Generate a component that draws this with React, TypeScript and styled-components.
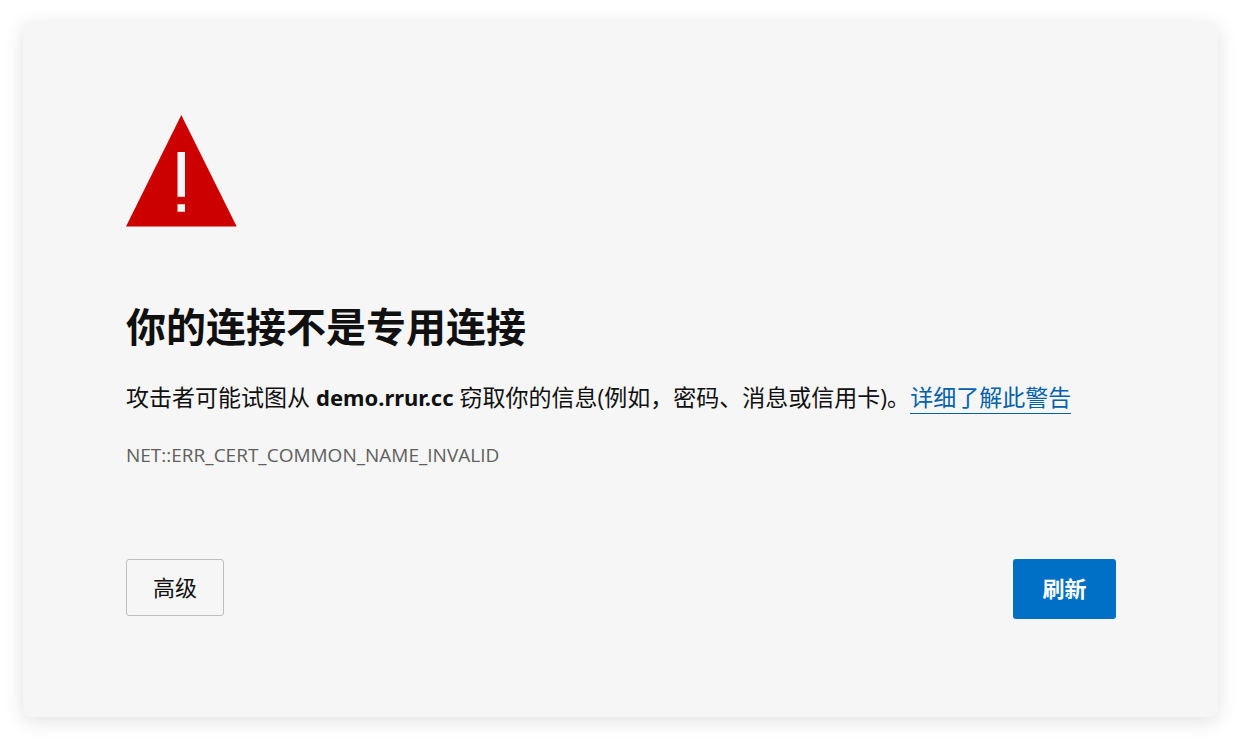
import React from "react";
import styled, { createGlobalStyle } from "styled-components";

const GlobalStyle = createGlobalStyle`
  * { box-sizing: border-box; }
  body {
    margin: 0;
    background: #ffffff;
    color: #101010;
    font-family: "Open Sans", "Noto Sans", "Noto Sans CJK SC", sans-serif;
  }
`;

const Page = styled.div`
  padding: 22px 23px 23px;
`;

const Card = styled.main`
  padding: 93px 102px 98px 103px;
  background: #f6f6f6;
  border-radius: 8px;
  box-shadow: 0 4px 20px rgba(0, 0, 0, 0.12);
`;

const WarningIcon = styled.svg`
  display: block;
  width: 111px;
  height: 112px;
`;

const Title = styled.h1`
  margin: 72px 0 0;
  font-size: 40px;
  line-height: 56px;
  font-weight: 700;
`;

const Message = styled.p`
  margin: 26px 0 0;
  font-size: 23px;
  line-height: 32px;
`;

const Host = styled.strong`
  font-family: "Noto Sans", sans-serif;
  font-size: 22px;
`;

const LearnMore = styled.a`
  color: #0061ab;
  text-decoration: none;
  border-bottom: 1px solid #0061ab;
`;

const ErrorCode = styled.div`
  margin-top: 28px;
  color: #5f5f5f;
  font-size: 19px;
  line-height: 28px;
`;

const Actions = styled.div`
  display: flex;
  justify-content: space-between;
  align-items: flex-start;
  margin-top: 90px;
`;

const Button = styled.button<{ $primary?: boolean }>`
  height: ${(p) => (p.$primary ? 60 : 57)}px;
  min-width: ${(p) => (p.$primary ? 103 : 98)}px;
  padding: 0 24px 4px;
  border: ${(p) => (p.$primary ? "0" : "1px solid #bebebe")};
  border-radius: 3px;
  background: ${(p) => (p.$primary ? "#0070c6" : "transparent")};
  color: ${(p) => (p.$primary ? "#ffffff" : "#101010")};
  font-family: inherit;
  font-size: 22px;
  font-weight: ${(p) => (p.$primary ? 700 : 400)};
  cursor: pointer;
`;

export default function App() {
  return (
    <Page lang="zh-CN">
      <GlobalStyle />
      <Card>
        <WarningIcon viewBox="0 0 111 112" aria-hidden="true">
          <path d="M55.3 0 110.7 111.5H0Z" fill="#cc0000" />
          <path d="M51.5 37H59v44.7h-7.500zM51.5 89.200H59v7.500h-7.500z" fill="#f6f6f6" />
        </WarningIcon>
        <Title>你的连接不是专用连接</Title>
        <Message>
          攻击者可能试图从 <Host>demo.rrur.cc</Host> 窃取你的信息(例如，密码、消息或信用卡)。
          <LearnMore href="#">详细了解此警告</LearnMore>
        </Message>
        <ErrorCode>NET::ERR_CERT_COMMON_NAME_INVALID</ErrorCode>
        <Actions>
          <Button type="button">高级</Button>
          <Button type="button" $primary>刷新</Button>
        </Actions>
      </Card>
    </Page>
  );
}
